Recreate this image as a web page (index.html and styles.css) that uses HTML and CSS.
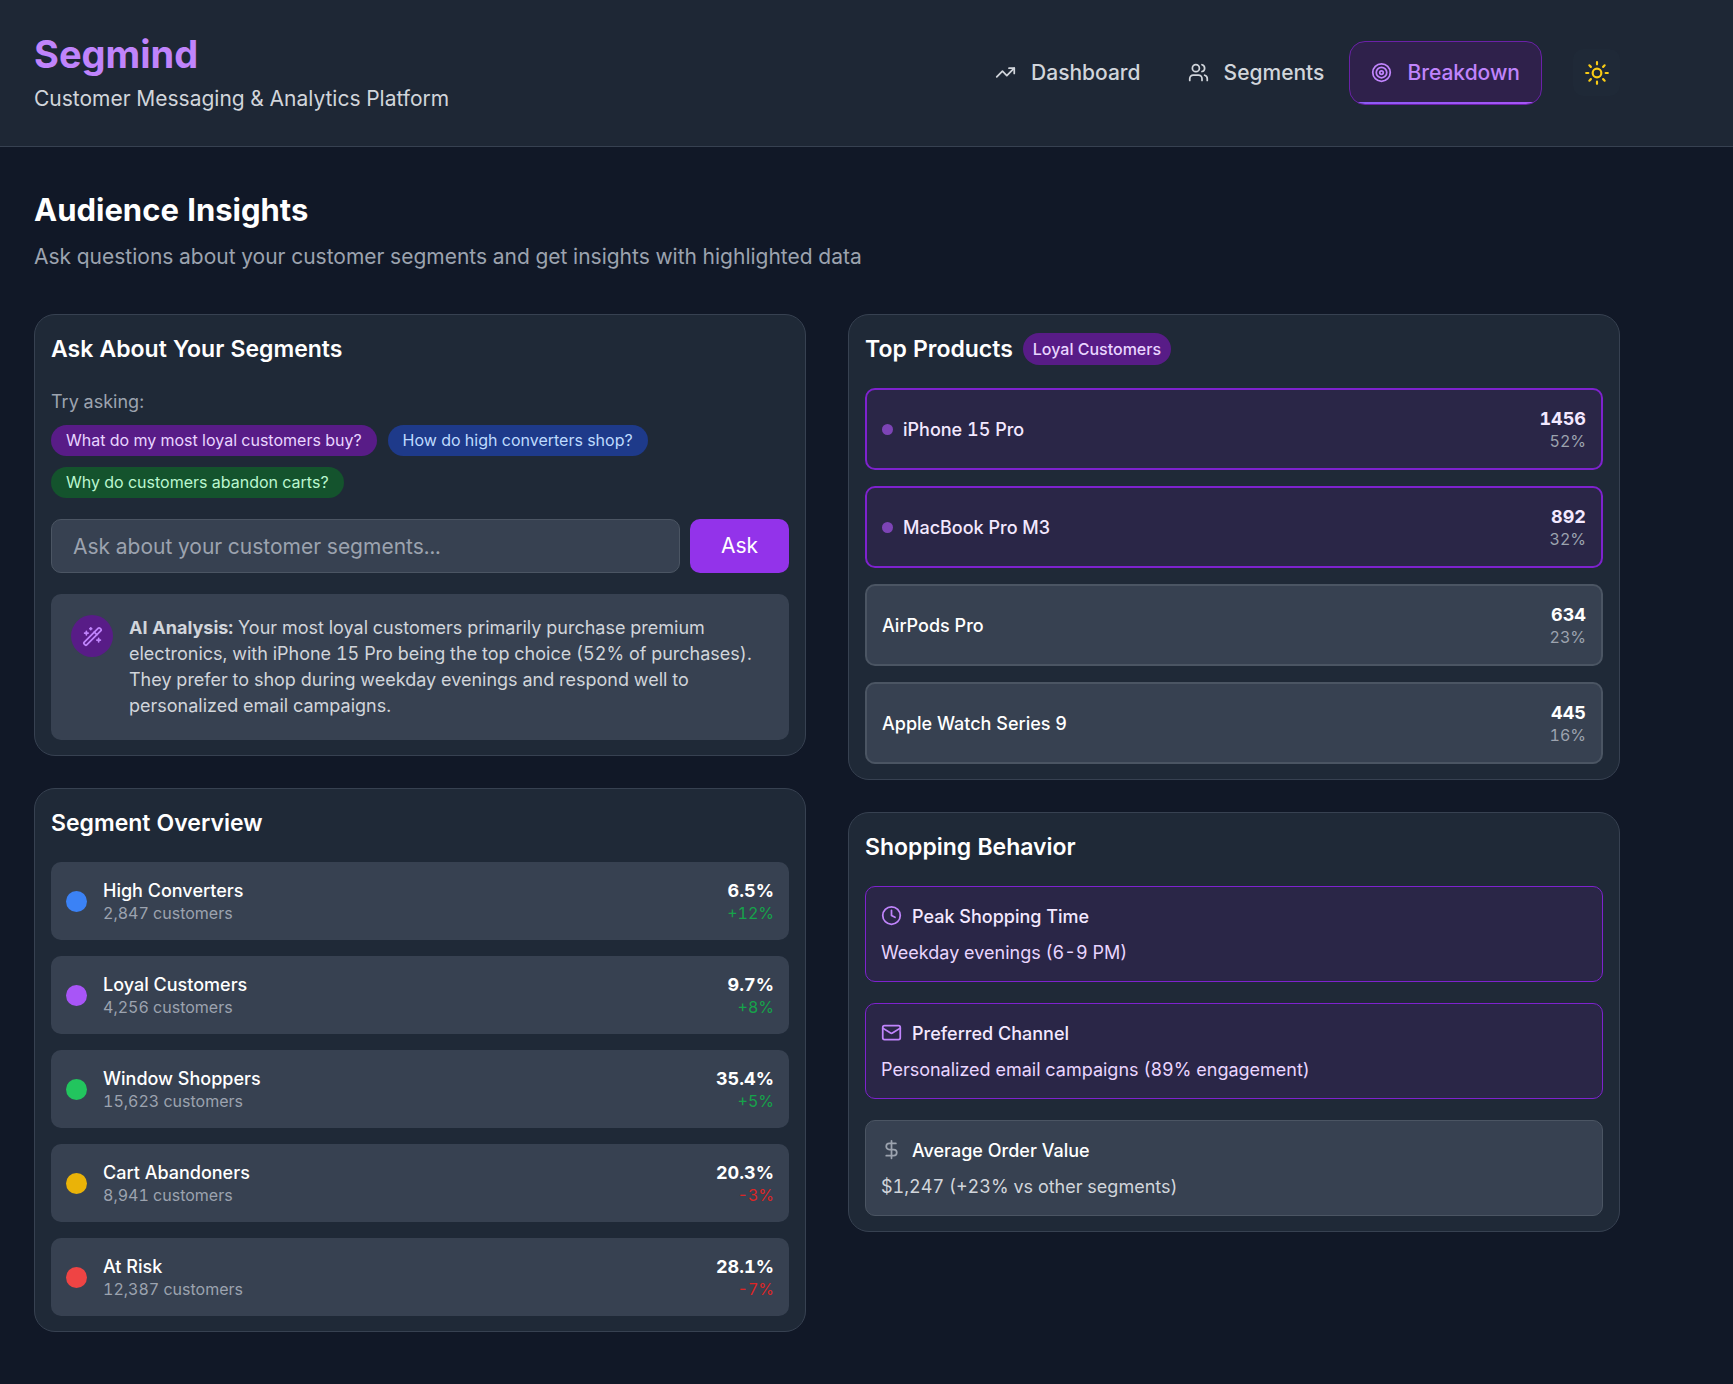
FILE: index.html
```html
<!DOCTYPE html>
<html lang="en">
<head>
<meta charset="utf-8">
<meta name="viewport" content="width=device-width, initial-scale=1">
<title>Segmind</title>
<link rel="stylesheet" href="styles.css">
</head>
<body>
<header class="site-header">
  <div class="container header-inner">
    <div class="brand">
      <h1 class="logo">Segmind</h1>
      <p class="tagline">Customer Messaging &amp; Analytics Platform</p>
    </div>
    <div class="header-actions">
      <nav class="nav" aria-label="Main">
        <a class="nav-link" href="#dashboard">
          <svg class="icon" viewBox="0 0 24 24" aria-hidden="true"><path d="M22 7 13.5 15.5 8.5 10.5 2 17"/><path d="M16 7h6v6"/></svg>
          Dashboard
        </a>
        <a class="nav-link" href="#segments">
          <svg class="icon" viewBox="0 0 24 24" aria-hidden="true"><path d="M16 21v-2a4 4 0 0 0-4-4H6a4 4 0 0 0-4 4v2"/><circle cx="9" cy="7" r="4"/><path d="M22 21v-2a4 4 0 0 0-3-3.870M16 3.130a4 4 0 0 1 0 7.750"/></svg>
          Segments
        </a>
        <a class="nav-link nav-link-active" href="#breakdown" aria-current="page">
          <svg class="icon" viewBox="0 0 24 24" aria-hidden="true"><circle cx="12" cy="12" r="10"/><circle cx="12" cy="12" r="6"/><circle cx="12" cy="12" r="2"/></svg>
          Breakdown
        </a>
      </nav>
      <button class="theme-toggle" type="button" aria-label="Toggle theme">
        <svg class="icon icon-sun" viewBox="0 0 24 24" aria-hidden="true"><circle cx="12" cy="12" r="4"/><path d="M12 2v2M12 20v2M4.930 4.930l1.410 1.410M17.660 17.660l1.410 1.410M2 12h2M20 12h2M6.340 17.660l-1.410 1.410M19.070 4.930l-1.410 1.410"/></svg>
      </button>
    </div>
  </div>
</header>

<main class="container page">
  <div class="page-head">
    <h2 class="page-title">Audience Insights</h2>
    <p class="page-sub">Ask questions about your customer segments and get insights with highlighted data</p>
  </div>

  <div class="columns">
    <div class="column">
      <section class="card">
        <h3 class="card-title">Ask About Your Segments</h3>
        <p class="hint">Try asking:</p>
        <div class="chips">
          <button class="chip chip-purple" type="button">What do my most loyal customers buy?</button>
          <button class="chip chip-blue" type="button">How do high converters shop?</button>
          <button class="chip chip-green" type="button">Why do customers abandon carts?</button>
        </div>
        <form class="ask-form">
          <input class="ask-input" type="text" aria-label="Question" placeholder="Ask about your customer segments...">
          <button class="ask-button" type="button">Ask</button>
        </form>
        <div class="analysis">
          <span class="analysis-icon">
            <svg class="icon" viewBox="0 0 24 24" aria-hidden="true"><path d="m21.640 3.640-1.280-1.280a1.210 1.210 0 0 0-1.720 0L2.360 18.640a1.210 1.210 0 0 0 0 1.720l1.280 1.280a1.200 1.200 0 0 0 1.720 0L21.640 5.360a1.200 1.200 0 0 0 0-1.720"/><path d="m14 7 3 3M5 6v4M19 14v4M10 2v2M7 8H3M21 16h-4M11 3H9"/></svg>
          </span>
          <p class="analysis-text"><strong>AI Analysis:</strong> Your most loyal customers primarily purchase premium electronics, with iPhone 15 Pro being the top choice (52% of purchases). They prefer to shop during weekday evenings and respond well to personalized email campaigns.</p>
        </div>
      </section>

      <section class="card">
        <h3 class="card-title">Segment Overview</h3>
        <ul class="list">
          <li class="segment"><span class="dot dot-blue"></span><div class="grow"><p class="name">High Converters</p><p class="meta">2,847 customers</p></div><div class="figures"><p class="value">6.5%</p><p class="meta up">+12%</p></div></li>
          <li class="segment"><span class="dot dot-purple"></span><div class="grow"><p class="name">Loyal Customers</p><p class="meta">4,256 customers</p></div><div class="figures"><p class="value">9.7%</p><p class="meta up">+8%</p></div></li>
          <li class="segment"><span class="dot dot-green"></span><div class="grow"><p class="name">Window Shoppers</p><p class="meta">15,623 customers</p></div><div class="figures"><p class="value">35.4%</p><p class="meta up">+5%</p></div></li>
          <li class="segment"><span class="dot dot-yellow"></span><div class="grow"><p class="name">Cart Abandoners</p><p class="meta">8,941 customers</p></div><div class="figures"><p class="value">20.3%</p><p class="meta down">-3%</p></div></li>
          <li class="segment"><span class="dot dot-red"></span><div class="grow"><p class="name">At Risk</p><p class="meta">12,387 customers</p></div><div class="figures"><p class="value">28.1%</p><p class="meta down">-7%</p></div></li>
        </ul>
      </section>
    </div>

    <div class="column">
      <section class="card">
        <h3 class="card-title">Top Products <span class="badge">Loyal Customers</span></h3>
        <ul class="list">
          <li class="product highlighted"><span class="bullet"></span><p class="name grow">iPhone 15 Pro</p><div class="figures"><p class="value">1456</p><p class="meta">52%</p></div></li>
          <li class="product highlighted"><span class="bullet"></span><p class="name grow">MacBook Pro M3</p><div class="figures"><p class="value">892</p><p class="meta">32%</p></div></li>
          <li class="product"><p class="name grow">AirPods Pro</p><div class="figures"><p class="value">634</p><p class="meta">23%</p></div></li>
          <li class="product"><p class="name grow">Apple Watch Series 9</p><div class="figures"><p class="value">445</p><p class="meta">16%</p></div></li>
        </ul>
      </section>

      <section class="card">
        <h3 class="card-title">Shopping Behavior</h3>
        <div class="list list-loose">
          <article class="behavior highlighted">
            <h4 class="behavior-title name"><svg class="icon" viewBox="0 0 24 24" aria-hidden="true"><circle cx="12" cy="12" r="10"/><path d="M12 6v6l4 2"/></svg>Peak Shopping Time</h4>
            <p class="behavior-text">Weekday evenings (6-9 PM)</p>
          </article>
          <article class="behavior highlighted">
            <h4 class="behavior-title name"><svg class="icon" viewBox="0 0 24 24" aria-hidden="true"><rect x="2" y="4" width="20" height="16" rx="2"/><path d="m22 7-8.970 5.700a1.940 1.940 0 0 1-2.060 0L2 7"/></svg>Preferred Channel</h4>
            <p class="behavior-text">Personalized email campaigns (89% engagement)</p>
          </article>
          <article class="behavior">
            <h4 class="behavior-title name"><svg class="icon" viewBox="0 0 24 24" aria-hidden="true"><path d="M12 2v20M17 5H9.500a3.500 3.500 0 0 0 0 7h5a3.500 3.500 0 0 1 0 7H6"/></svg>Average Order Value</h4>
            <p class="behavior-text">$1,247 (+23% vs other segments)</p>
          </article>
        </div>
      </section>
    </div>
  </div>
</main>
</body>
</html>
```

FILE: styles.css
```css
*,
*::before,
*::after {
  box-sizing: border-box;
}

body {
  margin: 0;
  min-height: 100vh;
  background: #111827;
  color: #fff;
  font-family: Inter, "Liberation Sans", sans-serif;
  font-size: 21px;
  font-variant-numeric: tabular-nums;
  line-height: 32px;
}

h1, h2, h3, h4, p, ul {
  margin: 0;
  padding: 0;
}

ul {
  list-style: none;
}

button,
input {
  font: inherit;
}

button {
  border: 0;
  cursor: pointer;
}

.icon {
  flex: none;
  width: 21px;
  height: 21px;
  fill: none;
  stroke: currentColor;
  stroke-width: 2;
  stroke-linecap: round;
  stroke-linejoin: round;
}

.container {
  max-width: 1654px;
  padding: 0 34px;
}

/* Header */
.site-header {
  background: #1e2735;
  border-bottom: 1px solid #374151;
}

.header-inner {
  display: flex;
  align-items: center;
  justify-content: space-between;
  padding-top: 30px;
  padding-bottom: 31px;
}

.logo {
  color: #c084fc;
  font-size: 38px;
  font-weight: 700;
  line-height: 49px;
}

.tagline {
  margin-top: 4px;
  color: #d1d5db;
}

.header-actions {
  display: flex;
  align-items: center;
  gap: 31px;
}

.nav {
  display: flex;
  gap: 3px;
}

.nav-link {
  display: flex;
  align-items: center;
  gap: 15px;
  padding: 15px 21px;
  border: 1px solid transparent;
  border-radius: 16px;
  color: #d1d5db;
  font-weight: 500;
  text-decoration: none;
}

.nav-link-active {
  position: relative;
  overflow: hidden;
  background: #2f214b;
  border-color: #6b21a8;
  color: #c084fc;
}

.nav-link-active::after {
  content: "";
  position: absolute;
  right: 0;
  bottom: 0;
  left: 0;
  height: 2px;
  background: linear-gradient(90deg, #8b5cf6, #a855f7);
}

.theme-toggle {
  display: grid;
  place-items: center;
  width: 47px;
  height: 47px;
  padding: 0;
  border-radius: 10px;
  background: #1f2937;
  color: #facc15;
}

.icon-sun {
  width: 26px;
  height: 26px;
}

/* Page heading */
.page {
  padding-top: 42px;
  padding-bottom: 52px;
}

.page-title {
  font-size: 31px;
  font-weight: 700;
  line-height: 42px;
}

.page-sub {
  margin-top: 10px;
  color: #9ca3af;
}

/* Cards */
.columns {
  display: grid;
  grid-template-columns: 1fr 1fr;
  align-items: start;
  gap: 42px;
  margin-top: 41px;
}

.column {
  display: grid;
  gap: 32px;
}

.card {
  padding: 16px 16px 15px;
  border: 1px solid #374151;
  border-radius: 21px;
  background: #1f2937;
}

.card-title {
  display: flex;
  align-items: center;
  gap: 10px;
  margin-bottom: 21px;
  font-size: 23px;
  font-weight: 600;
  line-height: 36px;
}

.badge {
  padding: 3px 10px;
  border-radius: 16px;
  background: #581c87;
  color: #e9d5ff;
  font-size: 16px;
  font-weight: 500;
  line-height: 26px;
}

.hint {
  margin-bottom: 10px;
  color: #9ca3af;
  font-size: 18px;
  line-height: 27px;
}

.chips {
  display: flex;
  flex-wrap: wrap;
  gap: 11px;
}

.chip {
  padding: 5px 15px;
  border-radius: 16px;
  font-size: 16px;
  line-height: 21px;
}

.chip-purple {
  background: #581c87;
  color: #e9d5ff;
}

.chip-blue {
  background: #1e3a8a;
  color: #bfdbfe;
}

.chip-green {
  background: #14532d;
  color: #bbf7d0;
}

.ask-form {
  display: flex;
  gap: 10px;
  margin-top: 21px;
}

.ask-input {
  flex: 1;
  min-width: 0;
  height: 54px;
  padding: 0 21px;
  border: 1px solid #4b5563;
  border-radius: 10px;
  background: #374151;
  color: #fff;
}

.ask-input::placeholder {
  color: #9ca3af;
}

.ask-button {
  padding: 0 31px;
  border-radius: 10px;
  background: #9333ea;
  color: #fff;
}

.analysis {
  display: flex;
  align-items: flex-start;
  gap: 16px;
  margin-top: 21px;
  padding: 21px 20px;
  border-radius: 10px;
  background: #374151;
}

.analysis-icon {
  display: grid;
  flex: none;
  place-items: center;
  width: 42px;
  height: 42px;
  border-radius: 50%;
  background: #581c87;
  color: #c084fc;
}

.analysis-text {
  color: #d1d5db;
  font-size: 18px;
  line-height: 26px;
}

/* Lists */
.list {
  display: grid;
  gap: 16px;
}

.list-loose {
  gap: 21px;
}

.grow {
  flex: 1;
}

.segment,
.product {
  display: flex;
  align-items: center;
  min-height: 78px;
  padding: 0 15px;
  border-radius: 10px;
  background: #374151;
}

.segment {
  gap: 16px;
}

.product {
  gap: 10px;
  min-height: 82px;
  border: 2px solid #4b5563;
}

.highlighted {
  border-color: #7e22ce;
  background: #2a2647;
  color: #f3e8ff;
}

.dot {
  width: 21px;
  height: 21px;
  border-radius: 50%;
}

.dot-blue { background: #3b82f6; }
.dot-purple { background: #a855f7; }
.dot-green { background: #22c55e; }
.dot-yellow { background: #eab308; }
.dot-red { background: #ef4444; }

.bullet {
  width: 11px;
  height: 11px;
  border-radius: 50%;
  background: #7d44b6;
}

.name {
  font-size: 18px;
  font-weight: 500;
  line-height: 25px;
}

.figures {
  text-align: right;
}

.value {
  font-size: 18px;
  font-weight: 700;
  line-height: 25px;
}

.meta {
  color: #9ca3af;
  font-size: 16px;
  line-height: 21px;
}

.up { color: #16a34a; }
.down { color: #dc2626; }

/* Shopping behavior */
.behavior {
  padding: 16px 15px 15px;
  border: 1px solid #4b5563;
  border-radius: 10px;
  background: #374151;
}

.behavior.highlighted {
  border-color: #7e22ce;
  background: #2a2647;
}

.behavior-title {
  display: flex;
  align-items: center;
  gap: 10px;
  line-height: 28px;
}

.behavior-title .icon {
  margin-bottom: 4px;
  color: #9ca3af;
}

.highlighted .behavior-title .icon {
  color: #c084fc;
}

.behavior-text {
  margin-top: 9px;
  color: #d1d5db;
  font-size: 18px;
  line-height: 26px;
}

.highlighted .behavior-text {
  color: #e9d5ff;
}
```
